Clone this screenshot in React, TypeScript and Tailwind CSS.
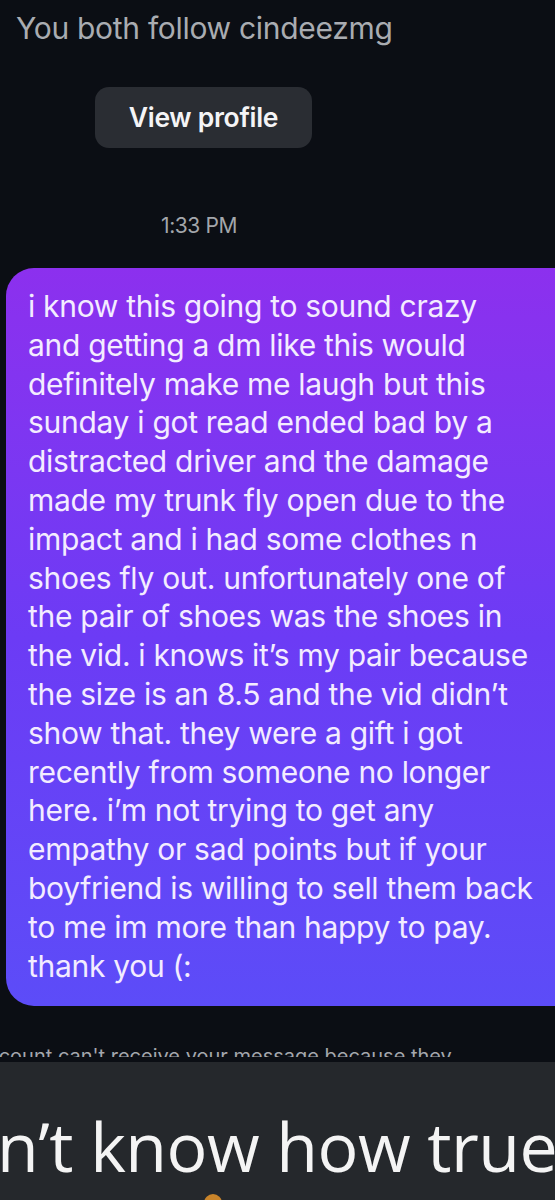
import React from 'react';

const lines = [
  'i know this going to sound crazy',
  'and getting a dm like this would',
  'definitely make me laugh but this',
  'sunday i got read ended bad by a',
  'distracted driver and the damage',
  'made my trunk fly open due to the',
  'impact and i had some clothes n',
  'shoes fly out. unfortunately one of',
  'the pair of shoes was the shoes in',
  'the vid. i knows it\u2019s my pair because',
  'the size is an 8.5 and the vid didn\u2019t',
  'show that. they were a gift i got',
  'recently from someone no longer',
  'here. i\u2019m not trying to get any',
  'empathy or sad points but if your',
  'boyfriend is willing to sell them back',
  'to me im more than happy to pay.',
  'thank you (:',
];

const App: React.FC = () => {
  return (
    <div className="w-[555px] h-[1200px] overflow-hidden bg-[#0b0e14] flex flex-col font-['Inter','Liberation_Sans',sans-serif]">
      {/* chat area */}
      <div className="flex flex-col">
        <p className="pl-[16px] pt-[9px] whitespace-nowrap text-[30px] leading-[38px] text-[#a9acb1] tracking-[-0.3px]">You both follow cindeezmg</p>

        <div className="pl-[95px] mt-[40px]">
          <button className="w-[217px] h-[61px] rounded-[14px] bg-[#2a2d33] text-[#f4f4f6] text-[26.5px] font-semibold tracking-[-0.3px]">
            View profile
          </button>
        </div>

        <p className="mt-[64px] pl-[161px] text-[21px] leading-[28px] text-[#a3a6ab] tracking-[-0.4px]">1:33 PM</p>

        <div className="mt-[28px] ml-[6px] mr-[-40px] rounded-[28px] bg-linear-to-b from-[#8c30ee] via-[#6c3bf5] to-[#5c4cf8] pl-[22px] pt-[19px] pb-[21px]">
          {lines.map(line => (
            <div key={line} className="whitespace-nowrap text-[30px] leading-[38.8px] text-[#f3ecff] tracking-[-0.3px]">
              {line}
            </div>
          ))}
        </div>

        <div className="mt-[38px] h-[13px] overflow-hidden">
          <p className="whitespace-nowrap -ml-[24px] text-[20px] leading-[24px] text-[#a4a7ad]">
            account can&apos;t receive your message because they
          </p>
        </div>
        <div className="h-[5px]" />
      </div>

      {/* caption band */}
      <div className="flex-1 bg-[#25282c] overflow-hidden">
        <p className="mt-[36px] -ml-[3px] whitespace-nowrap font-['Open_Sans','Noto_Sans',sans-serif] text-[68px] leading-[96px] text-[#f4f4f4] tracking-[-0.5px]">
          n&rsquo;t know how true
        </p>
        <div className="ml-[204px] w-[18px] h-[18px] rounded-full bg-[#c9842a]" />
      </div>
    </div>
  );
};

export default App;
